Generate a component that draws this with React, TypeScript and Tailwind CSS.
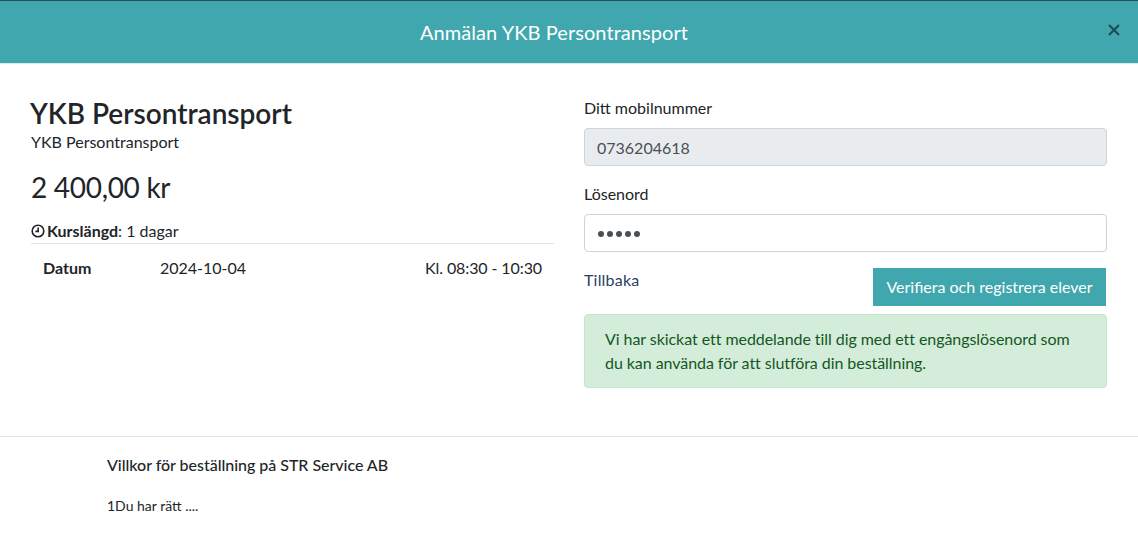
export default function App() {
  return (
    <div className="min-h-[558px] bg-white font-['Lato',sans-serif] text-[16px] leading-[24px] text-[#212529]">
      {/* Header */}
      <header className="relative h-[64px] border-t border-b border-t-[#24545a] border-b-[#d5e8ea] bg-[#40a7ae] flex items-center justify-center pr-[30px]">
        <h1 className="text-[20px] leading-[30px] tracking-[0.07px] text-white">Anmälan YKB Persontransport</h1>
        <button className="absolute right-[17px] top-[22px] text-[#1d4d55]" aria-label="Stäng">
          <svg width="14" height="14" viewBox="0 0 14 14" fill="none" stroke="currentColor" strokeWidth="2.2">
            <path d="M2 2l10 10M12 2L2 12" />
          </svg>
        </button>
      </header>

      {/* Main */}
      <main className="h-[373px] border-b border-[#dee2e6] px-[31px] grid grid-cols-2 gap-x-[30px]">
        <section className="pt-[32px]">
          <h2 className="-ml-[1px] text-[28px] leading-[34px] font-semibold tracking-[0px]">YKB Persontransport</h2>
          <p>YKB Persontransport</p>
          <p className="mt-[16px] text-[28px] leading-[34px] tracking-[-0.3px]">2 400,00 kr</p>
          <div className="mt-[15px] flex items-center border-b border-[#dee2e6]">
            <svg className="mr-[2px]" width="14" height="14" viewBox="0 0 14 14" fill="none" stroke="currentColor" strokeWidth="1.6">
              <circle cx="7" cy="7" r="5.8" />
              <path d="M7.2 3.6V7.4H4.4" />
            </svg>
            <span><b className="font-bold">Kurslängd</b>: 1 dagar</span>
          </div>
          <div className="flex px-[12px] pt-[12px]">
            <b className="w-[117px] font-bold">Datum</b>
            <span>2024-10-04</span>
            <span className="ml-auto tracking-[-0.1px]">Kl. 08:30 - 10:30</span>
          </div>
        </section>

        <section className="pt-[32px]">
          <label className="block">Ditt mobilnummer</label>
          <div className="mt-[8px] h-[38px] rounded-[4px] border border-[#ced4da] bg-[#e9ecef] px-[12px] pt-[1px] flex items-center text-[#495057]">0736204618</div>
          <label className="mt-[16px] block">Lösenord</label>
          <div className="mt-[8px] h-[38px] rounded-[4px] border border-[#ced4da] bg-white px-[13px] pt-[1px] flex items-center gap-[3px]">
            {[0, 1, 2, 3, 4].map((i) => (
              <span key={i} className="h-[6px] w-[6px] rounded-full bg-[#495057]" />
            ))}
          </div>
          <div className="mt-[16px] flex items-start justify-between">
            <a className="text-[#2a3f63] tracking-[0.2px]">Tillbaka</a>
            <button className="mr-[1px] h-[38px] w-[233px] bg-[#40a7ae] text-white">Verifiera och registrera elever</button>
          </div>
          <div className="mt-[8px] rounded-[4px] border border-[#c3e6cb] bg-[#d4edda] px-[20px] py-[12px] tracking-[-0.06px] text-[#155724]">
            Vi har skickat ett meddelande till dig med ett engångslösenord som du kan använda för att slutföra din beställning.
          </div>
        </section>
      </main>

      {/* Terms */}
      <footer className="pl-[107px] pt-[16px]">
        <h3 className="text-[16px] leading-[24px] font-medium tracking-[-0.03px]">Villkor för beställning på STR Service AB</h3>
        <p className="mt-[18px] text-[14px] leading-[21px]">1Du har rätt ....</p>
      </footer>
    </div>
  );
}
